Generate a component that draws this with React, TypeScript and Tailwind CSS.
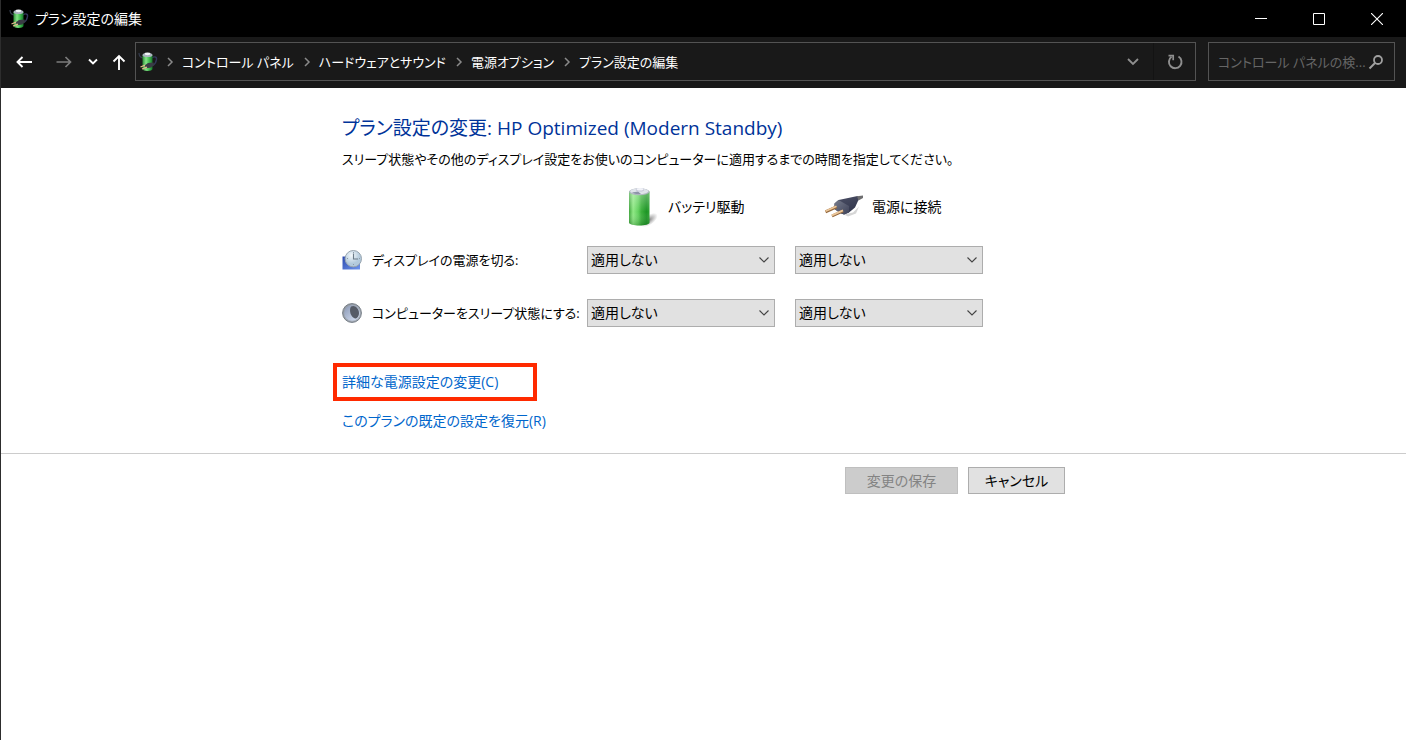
import { useState } from 'react';
import type { ReactNode } from 'react';

const breadcrumbs = [
  'コントロール パネル',
  'ハードウェアとサウンド',
  '電源オプション',
  'プラン設定の編集',
];

const timeouts = ['1 分', '5 分', '10 分', '30 分', '1 時間', '適用しない'];

function PowerIcon() {
  return (
    <svg width="20" height="20" viewBox="0 0 20 20" className="shrink-0" aria-hidden="true">
      <defs>
        <linearGradient id="power-body" x1="0" x2="1" y1="0" y2="0">
          <stop offset="0" stopColor="#2f8f3a" />
          <stop offset="0.35" stopColor="#86e488" />
          <stop offset="0.65" stopColor="#45c053" />
          <stop offset="1" stopColor="#16752a" />
        </linearGradient>
      </defs>
      <path d="M1 1C1 4 2.500 5.500 5 6" fill="none" stroke="#353c4e" strokeWidth="1.200" />
      <path d="M14 6c2-1.800 5-1.500 4.500 1.500-.4 3-2 5-4 6" fill="none" stroke="#33365a" strokeWidth="1.400" />
      <path d="M4.500 3v14c0 2.500 10 2.500 10 0V3z" fill="url(#power-body)" />
      <ellipse cx="9.500" cy="3" rx="5" ry="2" fill="#aab4be" />
      <ellipse cx="9.500" cy="1.800" rx="3" ry="1.400" fill="#f1f4f7" />
      <path d="M6.500 13.500l3.500-2.500 5.500-.5.500 2.500-3 2.500-4.500.8z" fill="#3a3c44" />
      <path d="M2.500 15l4.500-1.800M4 17l5-1.800" stroke="#e2b98a" strokeWidth="1.300" />
    </svg>
  );
}

function BatteryIcon() {
  return (
    <svg width="40" height="40" viewBox="0 0 40 40" className="shrink-0" aria-hidden="true">
      <defs>
        <linearGradient id="battery-body" x1="0" x2="1" y1="0" y2="0">
          <stop offset="0" stopColor="#3fa53c" />
          <stop offset="0.2" stopColor="#8ee884" />
          <stop offset="0.45" stopColor="#62d05e" />
          <stop offset="0.6" stopColor="#3aaf3a" />
          <stop offset="0.85" stopColor="#1c9424" />
          <stop offset="1" stopColor="#2aa02f" />
        </linearGradient>
        <linearGradient id="battery-shade" x1="0" x2="0" y1="0" y2="1">
          <stop offset="0" stopColor="#ffffff" stopOpacity="0.35" />
          <stop offset="0.6" stopColor="#ffffff" stopOpacity="0" />
          <stop offset="1" stopColor="#003c08" stopOpacity="0.25" />
        </linearGradient>
        <radialGradient id="battery-shadow">
          <stop offset="0" stopColor="#666" stopOpacity="0.8" />
          <stop offset="1" stopColor="#777" stopOpacity="0" />
        </radialGradient>
      </defs>
      <ellipse cx="29" cy="33" rx="10" ry="5" fill="url(#battery-shadow)" transform="rotate(-35 29 33)" />
      <path d="M9 4.500v31c0 4 20.500 4 20.500 0v-31z" fill="url(#battery-body)" />
      <path d="M9 4.500v31c0 4 20.500 4 20.500 0v-31z" fill="url(#battery-shade)" />
      <ellipse cx="19.250" cy="4.800" rx="10.250" ry="3.500" fill="#aeb6bf" />
      <ellipse cx="19.250" cy="4.300" rx="9.200" ry="2.900" fill="#dfe3ea" />
      <path d="M12 5.500l6-1 3 2.500c-4 .5-7 0-9-1.500z" fill="#8d93a8" />
      <ellipse cx="20" cy="2.800" rx="4.200" ry="1.800" fill="#c3c6d6" />
      <ellipse cx="20" cy="2.200" rx="3.500" ry="1.300" fill="#f2f3f8" />
    </svg>
  );
}

function PlugIcon() {
  return (
    <svg width="40" height="40" viewBox="0 0 40 40" className="shrink-0" aria-hidden="true">
      <defs>
        <linearGradient id="plug-body" x1="0" x2="0.5" y1="0" y2="1">
          <stop offset="0" stopColor="#4d5166" />
          <stop offset="1" stopColor="#32364d" />
        </linearGradient>
        <linearGradient id="plug-face" x1="0" x2="1" y1="0" y2="1">
          <stop offset="0" stopColor="#777c8c" />
          <stop offset="1" stopColor="#3d4158" />
        </linearGradient>
      </defs>
      <path d="M20 27.500l9-2 6-6-3 7-8 3z" fill="#bbb" opacity="0.600" />
      <path d="M10.500 16.500l4-3.500 12-2.500 7-1.500 2 2-1.500 3-3 6.500-6 5-5 2-4-1.500-5.500-4z" fill="url(#plug-body)" />
      <path d="M10.500 16.500l4-3.500 10.500 6 0 6.500-5 2-4-1.500-5.500-4z" fill="url(#plug-face)" />
      <path d="M33 9.200l6-.7v2.500l-4.500 2.500z" fill="#6e6e70" />
      <path d="M1.500 24.800l11-5M8 29l11-5" stroke="#94683d" strokeWidth="3" />
      <path d="M1.500 24.200l11-5M8 28.400l11-5" stroke="#ecc79a" strokeWidth="1.800" />
    </svg>
  );
}

function DisplayIcon() {
  return (
    <svg width="20" height="20" viewBox="0 0 20 20" className="shrink-0" aria-hidden="true">
      <defs>
        <linearGradient id="display-screen" x1="0" x2="1" y1="0" y2="1">
          <stop offset="0" stopColor="#2b49ad" />
          <stop offset="1" stopColor="#6f95ec" />
        </linearGradient>
        <radialGradient id="display-clock" cx="0.4" cy="0.3">
          <stop offset="0" stopColor="#f4f9fc" />
          <stop offset="1" stopColor="#b3cadc" />
        </radialGradient>
      </defs>
      <path d="M.5 6.500h17.500v13H.5z" fill="url(#display-screen)" />
      <circle cx="11.300" cy="8.700" r="8.200" fill="url(#display-clock)" stroke="#98a4ae" strokeWidth="1" />
      <path d="M11.500 3.500v5.500h4.500" fill="none" stroke="#6b7b88" strokeWidth="1.100" />
      <path d="M11.500 2v1M11.500 14v1M5 8.500h1M17 8.500h1" stroke="#8d9ba7" />
    </svg>
  );
}

function SleepIcon() {
  return (
    <svg width="20" height="20" viewBox="0 0 20 20" className="shrink-0" aria-hidden="true">
      <defs>
        <linearGradient id="sleep-ring" x1="0" x2="1" y1="0" y2="1">
          <stop offset="0" stopColor="#8f969f" />
          <stop offset="1" stopColor="#aeb6c1" />
        </linearGradient>
        <linearGradient id="sleep-moon" x1="0" x2="1" y1="0" y2="1">
          <stop offset="0" stopColor="#8997b4" />
          <stop offset="1" stopColor="#dbe5f7" />
        </linearGradient>
      </defs>
      <circle cx="10" cy="10" r="9.400" fill="url(#sleep-ring)" stroke="#747c85" strokeWidth="1" />
      <circle cx="10" cy="10" r="7.800" fill="url(#sleep-moon)" />
      <path d="M9 3.500c4-2 8 2 8 6.500 0 3.500-2 5.500-4 5.500-4-1-6.500-8-4-12z" fill="#555b66" />
    </svg>
  );
}

function Crumb({ children }: { children: ReactNode }) {
  return (
    <li className="flex items-center">
      <svg width="8" height="10" viewBox="0 0 8 10" className="mr-2 shrink-0" aria-hidden="true">
        <path d="M2 1l4 4-4 4" fill="none" stroke="#8a8a8a" strokeWidth="1.500" />
      </svg>
      <a href="#" className="whitespace-nowrap">
        {children}
      </a>
    </li>
  );
}

function TimeoutSelect({ label }: { label: string }) {
  const [value, setValue] = useState('適用しない');

  return (
    <div className="grid h-7 items-center">
      <select
        aria-label={label}
        value={value}
        onChange={(e) => setValue(e.target.value)}
        className="col-start-1 row-start-1 h-7 w-full appearance-none border border-[#adadad] bg-[#e1e1e1] pl-[3px] text-sm leading-5"
      >
        {timeouts.map((t) => (
          <option key={t}>{t}</option>
        ))}
      </select>
      <svg
        width="10"
        height="6"
        viewBox="0 0 10 6"
        className="pointer-events-none col-start-1 row-start-1 mr-1.5 justify-self-end"
        aria-hidden="true"
      >
        <path d="M.5.500l4.500 4.500 4.500-4.500" fill="none" stroke="#444" strokeWidth="1.100" />
      </svg>
    </div>
  );
}

function SettingRow({ icon, label }: { icon: ReactNode; label: string }) {
  return (
    <>
      <div className="flex items-center gap-2.5 text-[13px] whitespace-nowrap">
        {icon}
        <span>{label}:</span>
      </div>
      <TimeoutSelect label={`${label} (バッテリ駆動)`} />
      <TimeoutSelect label={`${label} (電源に接続)`} />
    </>
  );
}

function TitleBar() {
  return (
    <header className="flex h-[37px] items-center bg-black pl-2 text-white">
      <PowerIcon />
      <h1 className="ml-1.5 grow">プラン設定の編集</h1>
      <button aria-label="最小化" className="flex h-full w-[58px] items-center justify-center">
        <svg width="12" height="12" viewBox="0 0 12 12">
          <path d="M0 5.500h12" stroke="#fff" />
        </svg>
      </button>
      <button aria-label="最大化" className="flex h-full w-[58px] items-center justify-center">
        <svg width="12" height="12" viewBox="0 0 12 12">
          <path d="M.5.500h11v11H.5z" fill="none" stroke="#fff" />
        </svg>
      </button>
      <button aria-label="閉じる" className="flex h-full w-[58px] items-center justify-center">
        <svg width="12" height="12" viewBox="0 0 12 12">
          <path d="M0 0l12 12M12 0L0 12" stroke="#fff" strokeWidth="1.100" />
        </svg>
      </button>
    </header>
  );
}

function NavBar() {
  return (
    <nav className="flex h-[51px] items-center bg-[#191919] pr-[11px] pb-0.5 text-[13px] text-white">
      <div className="flex w-[134px] shrink-0 items-center pl-[15px]">
        <button aria-label="戻る">
          <svg width="16" height="12" viewBox="0 0 16 12">
            <path d="M16 6H1.500M6.500 1L1.500 6l5 5" fill="none" stroke="#fff" strokeWidth="1.900" />
          </svg>
        </button>
        <button aria-label="進む" className="ml-6">
          <svg width="16" height="12" viewBox="0 0 16 12">
            <path d="M.5 6h14M9.500 1l5 5-5 5" fill="none" stroke="#7c7c7c" strokeWidth="1.700" />
          </svg>
        </button>
        <button aria-label="最近表示した場所" className="ml-4">
          <svg width="10" height="8" viewBox="0 0 10 8">
            <path d="M1 1.500l4 4 4-4" fill="none" stroke="#fff" strokeWidth="1.900" />
          </svg>
        </button>
        <button aria-label="上へ" className="ml-3.5">
          <svg width="14" height="16" viewBox="0 0 14 16">
            <path d="M7 16V2M1.500 7.500L7 2l5.500 5.500" fill="none" stroke="#fff" strokeWidth="1.900" />
          </svg>
        </button>
      </div>
      <div className="flex h-[39px] grow items-center border border-[#535353]">
        <div className="pl-0.5">
          <PowerIcon />
        </div>
        <ol className="ml-2 flex grow items-center gap-[9px]">
          {breadcrumbs.map((name) => (
            <Crumb key={name}>{name}</Crumb>
          ))}
        </ol>
        <button aria-label="以前の場所" className="flex h-full w-10 items-center justify-center">
          <svg width="12" height="8" viewBox="0 0 12 8">
            <path d="M1 1l5 5 5-5" fill="none" stroke="#8f8f8f" strokeWidth="1.800" />
          </svg>
        </button>
        <button
          aria-label="最新の情報に更新"
          className="flex h-full w-[42px] items-center justify-center border-l border-[#131313]"
        >
          <svg width="16" height="16" viewBox="0 0 16 16">
            <path d="M11.500 2.500A6.300 6.300 0 1 1 4.500 2.800" fill="none" stroke="#8f8f8f" strokeWidth="1.900" />
            <path d="M1.500 1.600h4.700v4.700" fill="none" stroke="#8f8f8f" strokeWidth="1.700" />
          </svg>
        </button>
      </div>
      <label className="ml-3 flex h-[39px] w-[187px] shrink-0 items-center border border-[#535353] pr-2.5 pl-[9px]">
        <input
          type="text"
          aria-label="コントロール パネルの検索"
          placeholder="コントロール パネルの検..."
          className="w-full min-w-0 bg-transparent leading-5 outline-none placeholder:text-[#666]"
        />
        <svg width="16" height="16" viewBox="0 0 16 16" className="shrink-0" aria-hidden="true">
          <circle cx="10" cy="6" r="4" fill="none" stroke="#a0a0a0" strokeWidth="1.800" />
          <path d="M7 9l-5.500 5.500" stroke="#a0a0a0" strokeWidth="1.900" />
        </svg>
      </label>
    </nav>
  );
}

export default function App() {
  return (
    <div className="flex min-h-screen flex-col border-l border-[#2d2d2d] bg-white font-['Open_Sans','Noto_Sans_CJK_JP',sans-serif] text-sm leading-5 text-black [font-feature-settings:'palt']">
      <TitleBar />
      <NavBar />
      <main>
        <div className="mx-auto max-w-[723px] pt-7">
          <h2 className="text-[19px] leading-6 text-[#003399]">
            プラン設定の変更: HP Optimized (Modern Standby)
          </h2>
          <p className="mt-[9px] text-[13px]">
            スリープ状態やその他のディスプレイ設定をお使いのコンピューターに適用するまでの時間を指定してください。
          </p>
          <div className="mt-[18px] grid grid-cols-[225px_188px_188px] gap-x-5 gap-y-[25px]">
            <div className="col-start-2 -mb-1.5 flex items-center gap-2 pl-[33px]">
              <BatteryIcon />
              <span>バッテリ駆動</span>
            </div>
            <div className="-mb-1.5 flex items-center gap-2 pl-[29px]">
              <PlugIcon />
              <span>電源に接続</span>
            </div>
            <SettingRow icon={<DisplayIcon />} label="ディスプレイの電源を切る" />
            <SettingRow icon={<SleepIcon />} label="コンピューターをスリープ状態にする" />
          </div>
          <div className="-ml-[9px] mt-9 flex flex-col items-start text-[#0066cc]">
            <div className="flex h-[38px] w-[204px] items-center border-4 border-[#ff2a00] pl-[5px]">
              <a href="#">詳細な電源設定の変更(C)</a>
            </div>
            <a href="#" className="mt-2.5 ml-[9px]">
              このプランの既定の設定を復元(R)
            </a>
          </div>
        </div>
        <footer className="mt-[22px] border-t border-[#cccccc] pt-[13px]">
          <div className="mx-auto flex max-w-[723px] justify-end gap-2.5">
            <button disabled className="h-[27px] w-[113px] border border-[#bfbfbf] bg-[#cccccc] text-[#838383]">
              変更の保存
            </button>
            <button className="h-[27px] w-[97px] border border-[#adadad] bg-[#e1e1e1]">キャンセル</button>
          </div>
        </footer>
      </main>
    </div>
  );
}
